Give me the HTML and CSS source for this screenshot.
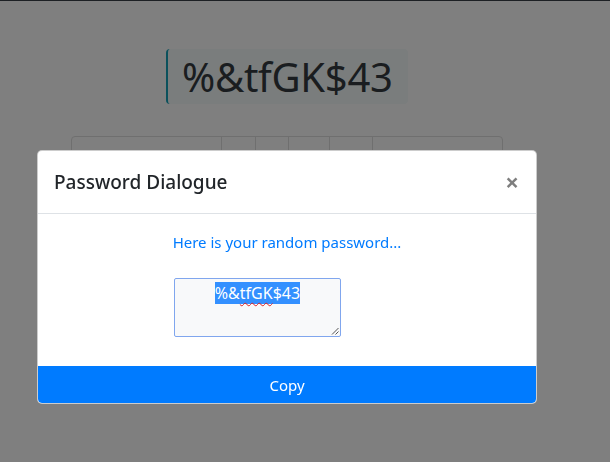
FILE: index.html
```html
<!DOCTYPE html>
<html lang="en">
<head>
<meta charset="utf-8">
<title>Password Generator</title>
<link rel="stylesheet" href="styles.css">
</head>
<body>
<div class="page">
  <div class="topline"></div>
  <div class="display-wrap">
    <div class="display">%&amp;tfGK$43</div>
  </div>
  <div class="options">
    <div class="opt opt-wide"><span class="tick t1">|</span></div>
    <div class="opt opt-s1"></div>
    <div class="opt opt-s2"></div>
    <div class="opt opt-s3"></div>
    <div class="opt opt-s4"></div>
    <div class="opt opt-last"><span class="tick t2">|</span><span class="tick t3">|</span><span class="tick t4">|</span></div>
  </div>
</div>

<div class="backdrop"></div>

<div class="modal">
  <div class="modal-header">
    <h5 class="modal-title">Password Dialogue</h5>
    <span class="close">&times;</span>
  </div>
  <div class="modal-body">
    <p class="lead-text">Here is your random password...</p>
    <div class="fake-textarea">
      <span class="sel">%&amp;<span class="spell">tfGK</span>$43</span>
      <svg class="grip" width="8" height="8" viewBox="0 0 8 8"><path d="M1 7.5L7.5 1M4.5 7.5L7.5 4.5" stroke="#555" stroke-width="1"/></svg>
    </div>
  </div>
  <button class="copy-btn">Copy</button>
</div>
</body>
</html>
```
FILE: styles.css
```css
html, body {
  margin: 0;
  padding: 0;
  background: #fff;
  font-family: "Noto Sans", "Open Sans", sans-serif;
  color: #212529;
}
.page {
  width: 610px;
  height: 462px;
  overflow: hidden;
}
.topline {
  height: 1px;
  background: #3a4048;
}
.display-wrap {
  display: flex;
  padding: 48px 0 0 166px;
}
.display {
  width: 242px;
  height: 55px;
  box-sizing: border-box;
  background: #f4fafa;
  border-left: 2px solid #17a2b8;
  border-radius: 4px;
  font-size: 40px;
  line-height: 55px;
  color: #343a40;
  padding-left: 14px;
  letter-spacing: -0.3px;
}
.options {
  display: flex;
  margin: 32px 0 0 71px;
  width: 432px;
  height: 60px;
  border: 1px solid #dedede;
  border-radius: 4px;
  box-sizing: border-box;
}
.opt {
  position: relative;
  border-right: 1px solid #dedede;
}
.opt-wide { width: 149px; }
.opt-s1 { width: 33px; }
.opt-s2 { width: 32px; }
.opt-s3 { width: 40px; }
.opt-s4 { width: 42px; }
.opt-last { flex: 1; border-right: 0; }
.tick {
  position: absolute;
  top: 10px;
  font-size: 10px;
  color: #333;
}
.t1 { left: 110px; }
.t2 { left: 25px; }
.t3 { left: 38px; }
.t4 { left: 115px; }

.backdrop {
  position: fixed;
  inset: 0;
  background: rgba(0, 0, 0, 0.5);
}
.modal {
  position: fixed;
  left: 37px;
  top: 150px;
  width: 500px;
  box-sizing: border-box;
  background: #fff;
  border: 1px solid rgba(0, 0, 0, 0.2);
  border-radius: 5px;
  overflow: hidden;
  display: flex;
  flex-direction: column;
}
.modal-header {
  display: flex;
  justify-content: space-between;
  align-items: center;
  padding: 16px;
  border-bottom: 1px solid #dee2e6;
}
.modal-title {
  margin: 0;
  font-size: 19px;
  font-weight: 500;
  line-height: 30px;
  color: #212529;
}
.close {
  font-size: 24px;
  font-weight: 700;
  line-height: 1;
  color: #000;
  opacity: 0.5;
  margin-right: 1px;
}
.modal-body {
  padding: 16px 16px 29px;
  display: flex;
  flex-direction: column;
  align-items: flex-start;
}
.lead-text {
  align-self: center;
  margin: 0 0 24px;
  color: #007bff;
  font-size: 15px;
  line-height: 24px;
}
.fake-textarea {
  position: relative;
  margin-left: 120px;
  width: 167px;
  height: 59px;
  box-sizing: border-box;
  border: 1px solid #80a6ee;
  border-radius: 2px;
  background: #f8f9fa;
  text-align: center;
  padding-top: 4px;
  font-size: 16px;
  line-height: 21px;
}
.sel {
  background: #3390ff;
  color: #fff;
}
.spell {
  text-decoration: underline wavy #e02020;
  text-decoration-thickness: 1px;
  text-underline-offset: 3px;
}
.grip {
  position: absolute;
  right: 1px;
  bottom: 1px;
}
.copy-btn {
  display: block;
  width: 100%;
  height: 37px;
  border: 0;
  margin: 0;
  background: #007bff;
  color: #fff;
  font-family: inherit;
  font-size: 15px;
  line-height: 24px;
  border-radius: 0 0 4px 4px;
  cursor: pointer;
}
```
